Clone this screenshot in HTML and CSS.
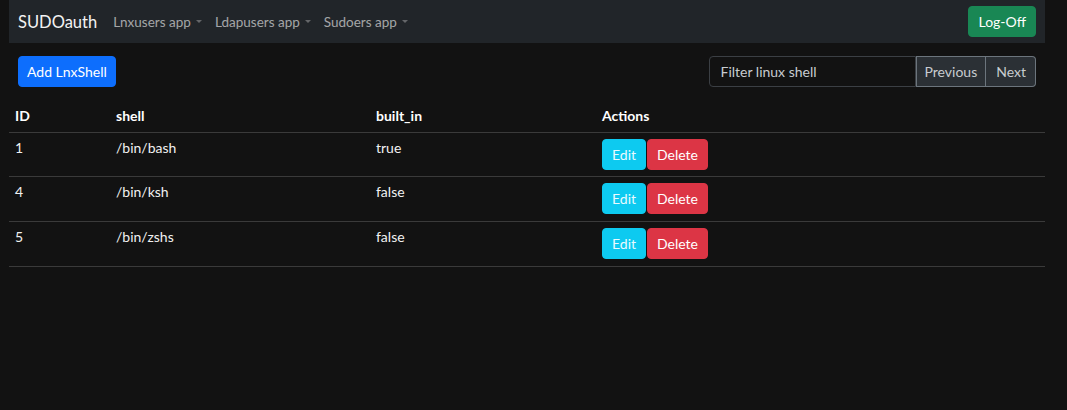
FILE: index.html
```html
<!DOCTYPE html>
<html>
<head>
<meta charset="utf-8">
<link rel="stylesheet" href="styles.css">
</head>
<body>
<div class="page">
  <nav class="navbar">
    <span class="brand">SUDOauth</span>
    <ul class="nav">
      <li class="nav-link">Lnxusers app<span class="caret"></span></li>
      <li class="nav-link">Ldapusers app<span class="caret"></span></li>
      <li class="nav-link">Sudoers app<span class="caret"></span></li>
    </ul>
    <button class="btn btn-success">Log-Off</button>
  </nav>
  <div class="toolbar">
    <button class="btn btn-primary">Add LnxShell</button>
    <div class="group">
      <input class="filter" type="text" placeholder="Filter linux shell">
      <button class="btn btn-page btn-first">Previous</button>
      <button class="btn btn-page btn-last">Next</button>
    </div>
  </div>
  <table class="table">
    <thead>
      <tr><th class="c-id">ID</th><th class="c-shell">shell</th><th class="c-built">built_in</th><th>Actions</th></tr>
    </thead>
    <tbody>
      <tr><td>1</td><td>/bin/bash</td><td>true</td><td class="actions"><button class="btn btn-info">Edit</button><button class="btn btn-danger">Delete</button></td></tr>
      <tr><td>4</td><td>/bin/ksh</td><td>false</td><td class="actions"><button class="btn btn-info">Edit</button><button class="btn btn-danger">Delete</button></td></tr>
      <tr><td>5</td><td>/bin/zshs</td><td>false</td><td class="actions"><button class="btn btn-info">Edit</button><button class="btn btn-danger">Delete</button></td></tr>
    </tbody>
  </table>
</div>
</body>
</html>
```
FILE: styles.css
```css
* { box-sizing: border-box; }
html, body { margin: 0; padding: 0; background: #121212; }
body {
  font-family: Lato, "Noto Sans", sans-serif;
  font-size: 14px;
  color: #f1f1f1;
}
.page { width: 1036px; margin-left: 9px; }
.navbar {
  height: 43px;
  background: #212529;
  display: flex;
  align-items: center;
  padding: 0 9px;
}
.brand { font-size: 16.5px; color: #f3f3f3; margin-right: 16px; }
.nav { display: flex; list-style: none; margin: 0; padding: 0; flex: 1; gap: 13px; }
.nav-link { color: rgba(255,255,255,0.6); font-size: 13.5px; display: flex; align-items: center; }
.caret {
  display: inline-block; width: 0; height: 0; margin-left: 5px;
  border-left: 3.5px solid transparent; border-right: 3.5px solid transparent;
  border-top: 3.5px solid rgba(255,255,255,0.3);
}
.btn {
  font-family: inherit; font-size: 14px; height: 31px; padding: 0 9px;
  border-radius: 4px; border: 1px solid transparent; color: #fff; cursor: pointer;
}
.btn-success { background: #198754; border-color: #198754; }
.btn-primary { background: #0d6efd; border-color: #0d6efd; padding: 0 8px; }
.btn-info { background: #0dcaf0; border-color: #0dcaf0; color: #eafaff; }
.btn-danger { background: #dc3545; border-color: #dc3545; }
.toolbar {
  display: flex; justify-content: space-between; align-items: center;
  padding: 0 9px; margin-top: 13px; height: 31px;
}
.group { display: flex; }
.filter {
  width: 207px; height: 31px; background: #121212; border: 1px solid #3b3f44;
  border-radius: 4px 0 0 4px; padding: 0 11px; font-family: inherit; font-size: 14px; color: #ddd;
}
.filter::placeholder { color: #c8ccd0; }
.btn-page { background: #2b3035; border: 1px solid #6c757d; color: #c8ccd0; border-radius: 0; }
.btn-first { padding: 0 8px; }
.btn-last { border-left: 0; border-radius: 0 4px 4px 0; padding: 0 9px 0 10px; }
.table { width: 100%; border-collapse: collapse; margin-top: 13px; }
.table th { text-align: left; font-weight: bold; color: #fff; height: 32px; padding: 0 6px; border-bottom: 1px solid #3a3a3a; }
.table td { vertical-align: top; padding: 6px 6px 0; height: 44.7px; border-bottom: 1px solid #3a3a3a; color: #f1f1f1; }
.table td.actions { padding-top: 6px; }
.c-id { width: 101px; }
.c-shell { width: 260px; }
.c-built { width: 226px; }
.actions .btn { height: 31px; }
.actions .btn-info { padding: 0 9px; margin-right: 1px; }
.actions .btn-danger { padding: 0 9px; }
```
